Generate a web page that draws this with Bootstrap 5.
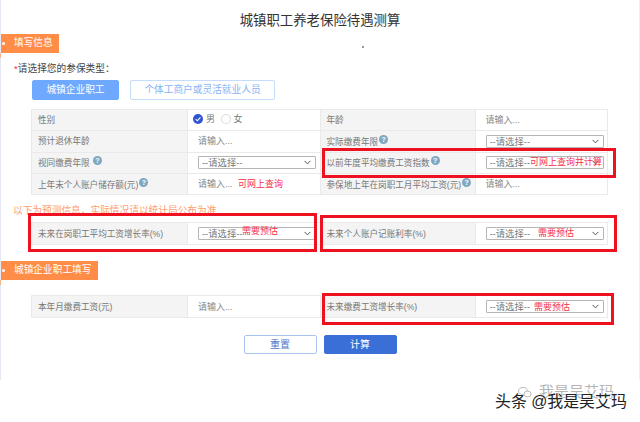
<!DOCTYPE html>
<html lang="zh-CN">
<head>
  <meta charset="UTF-8" />
  <title>城镇职工养老保险待遇测算</title>
  <link href="https://cdn.jsdelivr.net/npm/bootstrap@5.3.2/dist/css/bootstrap.min.css" rel="stylesheet" />
  <style>
    html, body { margin: 0; background: #fff; overflow: hidden; }
    body { font-family: "Liberation Sans", "Noto Sans CJK SC", sans-serif; font-size: 10px; color: #666; }
    .sheet { position: relative; width: 640px; height: 422px; overflow: hidden; }
    .side-lines { position: absolute; top: 0; left: 0; width: 640px; height: 380px; border-left: 1px solid #e6e8f4; border-right: 1px solid #eee; pointer-events: none; }

    .page-title { margin: 0; padding-top: 13px; height: 34px; font-size: 13.4px; line-height: 15px; font-weight: 400; color: #333; text-align: center; }
    .stray-dot { position: absolute; left: 362px; top: 46px; width: 2px; height: 2px; background: #999; }

    .tag-label { position: relative; display: inline-block; margin-left: 1px; height: 19px; line-height: 18px; padding: 0 6px 0 13px; background: #ff8d47; color: #fff; font-size: 9.7px; vertical-align: top; }
    .tag-label::before { content: ""; position: absolute; left: 1px; top: 8px; width: 3px; height: 3px; border-radius: 50%; background: #fff; }
    .tag-label::after { content: ""; position: absolute; left: -1px; top: 19px; width: 1px; height: 5px; background: #f6b48c; }

    .pick-label { padding: 9px 0 0 14px; height: 27px; font-size: 9.7px; line-height: 14px; color: #444; }
    .pick-label i { color: #e33; font-style: normal; }

    .type-row { margin-left: 32px; gap: 11px; }
    .type-btn { width: 87px; height: 20px; padding: 0; font-size: 9.7px; line-height: 18px; border-radius: 2px; }
    .type-btn-on { background: #6fa8ff; border: 1px solid #6fa8ff; color: #fff; }
    .type-btn-off { width: 145px; background: #fff; border: 1px solid #c6dcfb; color: #85b4f5; }

    .info-table { width: 577px; margin: 0 0 0 31px; table-layout: fixed; border-color: #eaeaea; color: #777; font-size: 8.6px; }
    .info-first { margin-top: 9px; }
    .info-table > :not(caption) > * > * { padding: 0 6px; height: 21.3px; line-height: 12px; vertical-align: middle; color: #777; background: #fff; box-shadow: none; white-space: nowrap; }
    .info-table > :not(caption) > * > .cell-name { width: 156px; background: #f4f4f4; color: #777; }
    .info-table > :not(caption) > * > .cell-val { width: 132.5px; padding-left: 10px; }
    .info-table > :not(caption) > * > .radio-cell { padding-left: 5px; font-size: 9px; }
    .info-table > :not(caption) > * > .cell-name-r { width: 155px; }
    .single-row > :not(caption) > * > * { height: 22px; }

    .hint { display: inline-block; width: 9px; height: 9px; margin-left: 1px; border-radius: 50%; background: #7ea7c0; color: #fff; font-size: 7px; line-height: 9px; text-align: center; font-weight: 700; vertical-align: 3px; }
    .plain-input { display: block; width: 100%; padding: 0; border: 0; height: 14px; font-size: 9px; line-height: 14px; color: #777; background: transparent; border-radius: 0; }
    .plain-input::placeholder { color: #888; opacity: 1; }
    .plain-input:focus { box-shadow: none; }
    .pick-box { width: 118px; height: 13px; padding: 0 0 0 3px; font-size: 9.4px; line-height: 11px; color: #777; border: 1px solid #b5b5b5; border-radius: 1px; background-position: right 3px center; background-size: 9px 7px; }
    .sex-mark { display: inline-flex; align-items: center; gap: 3px; margin-right: 3px; }

    .warn-note { margin: 9px 0 0 13px; height: 18px; line-height: 14px; font-size: 9.7px; color: #ff9d6e; }
    .gap-after-table2 { height: 16px; }
    .gap-after-tag2 { height: 15px; }

    .act-row { margin-top: 17px; gap: 7px; }
    .act-btn { width: 73px; height: 19px; padding: 0; font-size: 10px; line-height: 17px; border-radius: 2px; }
    .act-reset { background: #fff; border: 1px solid #a9c3ee; color: #4f77c9; }
    .act-calc { background: #3a6fd8; border: 1px solid #3a6fd8; color: #fff; }

    .red-note { position: absolute; color: #f5314a; font-size: 9px; line-height: 12px; white-space: nowrap; }
    .red-frame { position: absolute; border: 3px solid #ee1120; pointer-events: none; }

    .mark-faint { position: absolute; left: 517px; top: 384px; display: flex; align-items: center; gap: 6px; color: #b5b5b5; font-size: 15px; line-height: 16px; white-space: nowrap; }
    .mark-main { position: absolute; left: 495px; top: 392px; color: #222; font-size: 15.9px; line-height: 20px; white-space: nowrap; text-shadow: 0 0 2px #fff, 0 0 2px #fff; }
  </style>
</head>
<body>
  <div class="sheet">
    <div class="side-lines"></div>

    <h1 class="page-title">城镇职工养老保险待遇测算</h1>
    <div class="stray-dot"></div>

    <div class="tag-label">填写信息</div>
    <div class="pick-label"><i>*</i>请选择您的参保类型：</div>
    <div class="d-flex type-row">
      <button type="button" class="btn type-btn type-btn-on">城镇企业职工</button>
      <button type="button" class="btn type-btn type-btn-off">个体工商户或灵活就业人员</button>
    </div>

    <!-- 基本信息 -->
    <table class="table table-bordered info-table info-first">
      <tbody>
        <tr>
          <td class="cell-name">性别</td>
          <td class="cell-val radio-cell">
            <span class="sex-mark">
              <svg width="10" height="10" viewBox="0 0 9 9"><circle cx="4.5" cy="4.5" r="4.5" fill="#2f55d4"/><path d="M2.4 4.6l1.5 1.5 2.8-3" fill="none" stroke="#fff" stroke-width="1"/></svg>男
            </span>
            <span class="sex-mark">
              <svg width="10" height="10" viewBox="0 0 9 9"><circle cx="4.5" cy="4.5" r="4" fill="#fff" stroke="#ddd"/></svg>女
            </span>
          </td>
          <td class="cell-name cell-name-r">年龄</td>
          <td class="cell-val"><input class="form-control plain-input" placeholder="请输入..." /></td>
        </tr>
        <tr>
          <td class="cell-name">预计退休年龄</td>
          <td class="cell-val"><input class="form-control plain-input" placeholder="请输入..." /></td>
          <td class="cell-name cell-name-r">实际缴费年限<span class="hint">?</span></td>
          <td class="cell-val"><select class="form-select pick-box"><option>--请选择--</option></select></td>
        </tr>
        <tr>
          <td class="cell-name">视同缴费年限 <span class="hint">?</span></td>
          <td class="cell-val"><select class="form-select pick-box"><option>--请选择--</option></select></td>
          <td class="cell-name cell-name-r">以前年度平均缴费工资指数<span class="hint">?</span></td>
          <td class="cell-val"><select class="form-select pick-box"><option>--请选择--</option></select></td>
        </tr>
        <tr>
          <td class="cell-name">上年末个人账户储存额(元)<span class="hint">?</span></td>
          <td class="cell-val"><input class="form-control plain-input" placeholder="请输入..." /></td>
          <td class="cell-name cell-name-r">参保地上年在岗职工月平均工资(元)<span class="hint">?</span></td>
          <td class="cell-val"><input class="form-control plain-input" placeholder="请输入..." /></td>
        </tr>
      </tbody>
    </table>

    <div class="warn-note">以下为预测信息，实际情况请以统计局公布为准</div>

    <table class="table table-bordered info-table single-row">
      <tbody>
        <tr>
          <td class="cell-name">未来在岗职工平均工资增长率(%)</td>
          <td class="cell-val"><select class="form-select pick-box"><option>--请选择--</option></select></td>
          <td class="cell-name cell-name-r">未来个人账户记账利率(%)</td>
          <td class="cell-val"><select class="form-select pick-box"><option>--请选择--</option></select></td>
        </tr>
      </tbody>
    </table>

    <div class="gap-after-table2"></div>
    <div class="tag-label">城镇企业职工填写</div>
    <div class="gap-after-tag2"></div>

    <table class="table table-bordered info-table single-row">
      <tbody>
        <tr>
          <td class="cell-name">本年月缴费工资(元)</td>
          <td class="cell-val"><input class="form-control plain-input" placeholder="请输入..." /></td>
          <td class="cell-name cell-name-r">未来缴费工资增长率(%)</td>
          <td class="cell-val"><select class="form-select pick-box"><option>--请选择--</option></select></td>
        </tr>
      </tbody>
    </table>

    <div class="d-flex justify-content-center act-row">
      <button type="button" class="btn act-btn act-reset">重置</button>
      <button type="button" class="btn act-btn act-calc">计算</button>
    </div>

    <!-- 截图上的红色批注 -->
    <span class="red-note" style="left:238px;top:178px">可网上查询</span>
    <span class="red-note" style="left:530px;top:156px">可网上查询并计算</span>
    <span class="red-note" style="left:242px;top:225px">需要预估</span>
    <span class="red-note" style="left:538px;top:227px">需要预估</span>
    <span class="red-note" style="left:534px;top:301px">需要预估</span>
    <div class="red-frame" style="left:322px;top:148px;width:294px;height:30px"></div>
    <div class="red-frame" style="left:28px;top:213px;width:289px;height:39px"></div>
    <div class="red-frame" style="left:320px;top:215px;width:297px;height:37px"></div>
    <div class="red-frame" style="left:322px;top:293px;width:292px;height:32px"></div>

    <div class="mark-faint">
      <svg width="16" height="11" viewBox="0 0 14 11"><ellipse cx="5" cy="4" rx="4.4" ry="3.5" fill="none" stroke="#bbb"/><ellipse cx="9.5" cy="7" rx="3.6" ry="2.9" fill="#fff" stroke="#bbb"/></svg>
      <span>我是吴艾玛</span>
    </div>
    <div class="mark-main">头条 @我是吴艾玛</div>
  </div>

  <script src="https://cdn.jsdelivr.net/npm/bootstrap@5.3.2/dist/js/bootstrap.bundle.min.js"></script>
</body>
</html>
